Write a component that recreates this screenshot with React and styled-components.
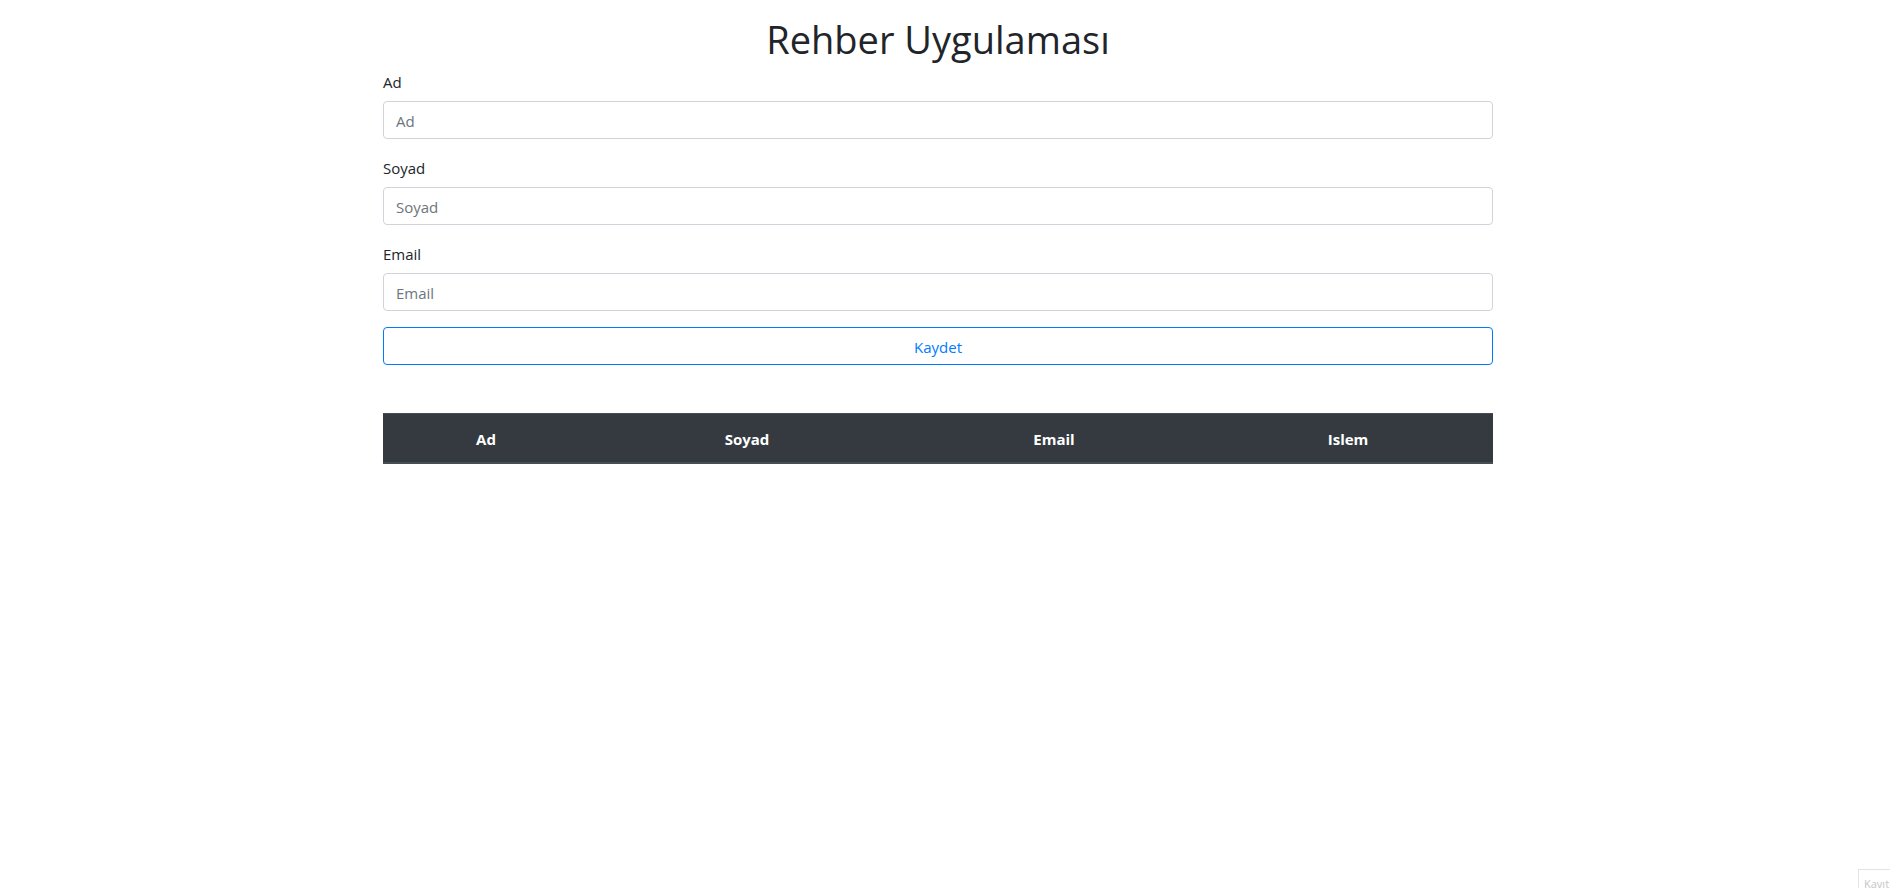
import React from 'react';
import styled, { createGlobalStyle } from 'styled-components';

const GlobalStyle = createGlobalStyle`
  *, *::before, *::after { box-sizing: border-box; }
  body {
    margin: 0;
    background: #fff;
    color: #212529;
    font-family: "Segoe UI", "Open Sans", "Noto Sans", sans-serif;
    font-size: 15px;
    line-height: 24px;
  }
`;

const Page = styled.div`
  padding: 15px 14px 0 0;
`;

const Container = styled.main`
  width: 100%;
  max-width: 1140px;
  margin: 0 auto;
  padding: 0 15px;
`;

const Title = styled.h1`
  margin: 0 0 7px;
  font-size: 38px;
  font-weight: 400;
  line-height: 48px;
  text-align: center;
`;

const Form = styled.form`
  margin: 0 0 48px;
`;

const Field = styled.div`
  display: flex;
  flex-direction: column;
  gap: 7px;
  margin-bottom: 16px;

  & + & {
    padding-top: 1px;
  }
`;

const Label = styled.label`
  align-self: flex-start;
`;

const Input = styled.input`
  width: 100%;
  height: 38px;
  padding: 7px 12px 5px;
  border: 1px solid #ced4da;
  border-radius: 4px;
  background: #fff;
  color: #495057;
  font: inherit;

  &::placeholder {
    color: #6c757d;
    opacity: 1;
  }
`;

const SaveButton = styled.button`
  display: block;
  width: 100%;
  height: 38px;
  padding: 7px 12px 5px;
  border: 1px solid #007bff;
  border-radius: 4px;
  background: transparent;
  color: #007bff;
  font: inherit;
  cursor: pointer;
`;

const Table = styled.table`
  width: 100%;
  table-layout: fixed;
  border-collapse: separate;
  border-spacing: 0;
`;

const Column = styled.col`
  width: ${({ $width }) => $width}px;
`;

const HeaderCell = styled.th`
  padding: 13px 12px 11px;
  border-top: 1px solid #454d55;
  border-bottom: 2px solid #454d55;
  background: #343a40;
  color: #fff;
  font-weight: 700;
  text-align: center;
`;

const Notice = styled.div`
  position: fixed;
  right: 0;
  bottom: 0;
  width: 32px;
  height: 19px;
  padding: 6px 0 0 5px;
  overflow: hidden;
  border: solid #e3e3e3;
  border-width: 1px 0 0 1px;
  background: #fff;
  color: #c4c6c8;
  font-size: 11px;
  line-height: 16px;
  white-space: nowrap;
`;

const fields = [
  { id: 'ad', label: 'Ad', type: 'text' },
  { id: 'soyad', label: 'Soyad', type: 'text' },
  { id: 'email', label: 'Email', type: 'email' },
];

const columns = [
  { title: 'Ad', width: 206 },
  { title: 'Soyad', width: 316 },
  { title: 'Email', width: 298 },
  { title: 'Islem', width: 290 },
];

export default function App() {
  return (
    <Page>
      <GlobalStyle />
      <Container>
        <Title>Rehber Uygulaması</Title>
        <Form onSubmit={(event) => event.preventDefault()}>
          {fields.map(({ id, label, type }) => (
            <Field key={id}>
              <Label htmlFor={id}>{label}</Label>
              <Input id={id} name={id} type={type} placeholder={label} />
            </Field>
          ))}
          <SaveButton type="submit">Kaydet</SaveButton>
        </Form>
        <Table>
          <colgroup>
            {columns.map(({ title, width }) => (
              <Column key={title} $width={width} />
            ))}
          </colgroup>
          <thead>
            <tr>
              {columns.map(({ title }) => (
                <HeaderCell key={title} scope="col">{title}</HeaderCell>
              ))}
            </tr>
          </thead>
          <tbody />
        </Table>
      </Container>
      <Notice>Kayıt</Notice>
    </Page>
  );
}
